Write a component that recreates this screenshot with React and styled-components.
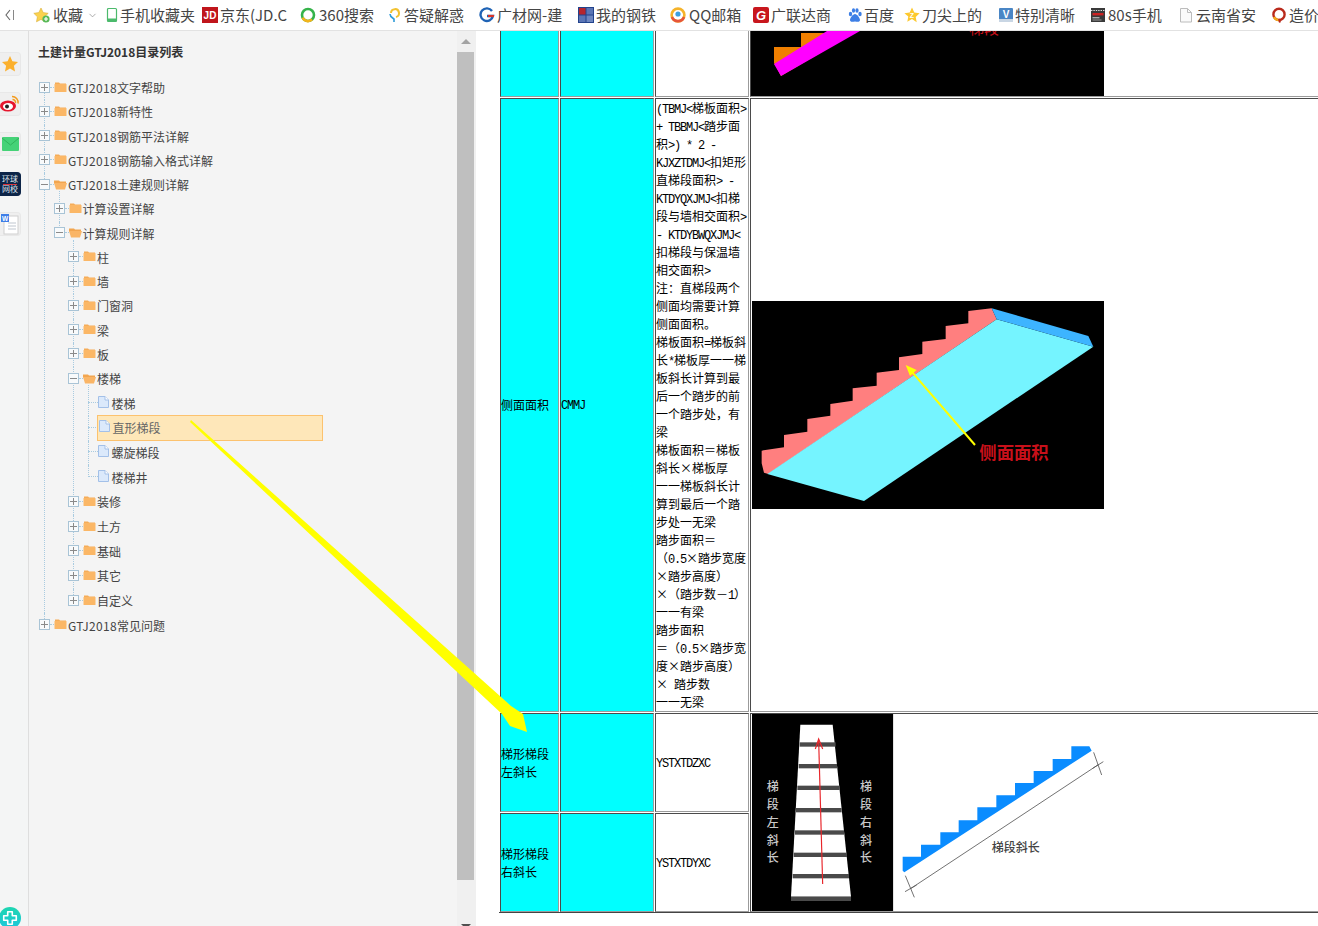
import React from "react";
import styled, { createGlobalStyle } from "styled-components";
import { ChevronDown } from "lucide-react";

const FONT = `"Noto Sans CJK SC", "Noto Sans", sans-serif`;

const Global = createGlobalStyle`
  html, body { margin: 0; padding: 0; background: #fff; overflow: hidden; }
  * { box-sizing: border-box; }
`;

const Page = styled.div`
  position: relative;
  width: 1318px;
  height: 926px;
  overflow: hidden;
  display: flex;
  flex-direction: column;
  font-family: ${FONT};
`;

/* ---------- bookmarks bar ---------- */
const Toolbar = styled.div`
  flex: 0 0 31px;
  height: 31px;
  display: flex;
  align-items: center;
  padding-left: 5px;
  background: #fff;
  border-bottom: 1px solid #e2e2e2;
  overflow: hidden;
`;
const BackBtn = styled.svg`
  flex: 0 0 10px;
  width: 10px;
  height: 12px;
  margin-right: 18px;
`;
const Bookmark = styled.div`
  flex: 0 0 ${(p) => p.$w}px;
  width: ${(p) => p.$w}px;
  display: flex;
  align-items: center;
  overflow: hidden;
  white-space: nowrap;
  font-size: 15px;
  line-height: 20px;
  color: #454545;
  & > svg:first-child { flex: none; margin-right: ${(p) => p.$gap ?? 2}px; }
`;
const Caret = styled(ChevronDown)`
  flex: none;
  margin-left: 4px;
  color: #888;
`;

const Ic = ({ children, w = 16 }) => (
  <svg width={w} height="16" viewBox={`0 0 ${w} 16`}>{children}</svg>
);
const IcoStar = () => (
  <Ic w={18}>
    <path d="M8 1l2.2 4.6 5 .7-3.6 3.5.9 5L8 12.4l-4.5 2.4.9-5L.8 6.3l5-.7z" fill="#fbd24e" stroke="#d9ae3a" strokeWidth=".6" />
    <circle cx="13" cy="12" r="3.6" fill="#58b957" />
    <path d="M13 10v4M11 12h4" stroke="#fff" strokeWidth="1.2" />
  </Ic>
);
const IcoPhone = () => (
  <Ic>
    <rect x="5.5" y="1.5" width="9" height="13" rx="1" fill="#fff" stroke="#4cba6c" strokeWidth="1.2" />
    <rect x="5.5" y="11.5" width="9" height="3" fill="#4cba6c" />
  </Ic>
);
const IcoJD = () => (
  <Ic>
    <rect width="16" height="16" fill="#c0151c" />
    <text x="8" y="12" textAnchor="middle" fontSize="10" fontWeight="700" fill="#fff" fontFamily="Liberation Sans">JD</text>
  </Ic>
);
const Ico360 = () => (
  <Ic>
    <circle cx="8" cy="8" r="6" fill="none" stroke="#35b34a" strokeWidth="2.6" />
    <path d="M2.6 10.6A6 6 0 0 0 12 12.6" fill="none" stroke="#f3b41b" strokeWidth="2.6" />
  </Ic>
);
const IcoAsk = () => (
  <Ic>
    <path d="M4 6a4 4 0 1 1 5 4" fill="none" stroke="#f2c230" strokeWidth="2" />
    <path d="M3 7c0 3 3 4 4 5v3" fill="none" stroke="#2f9bd8" strokeWidth="1.6" />
  </Ic>
);
const IcoG = () => (
  <Ic>
    <path d="M13 4A6.3 6.3 0 1 0 14 9H8" fill="none" stroke="#1f63b5" strokeWidth="2.4" />
    <path d="M9 9h6" stroke="#d8352a" strokeWidth="2.2" />
  </Ic>
);
const IcoSteel = () => (
  <Ic>
    <rect width="16" height="16" fill="#22438c" />
    <rect x="1" y="1" width="6.5" height="6.5" fill="#b5252d" />
    <rect x="8.5" y="8.5" width="6.5" height="6.5" fill="#6d86c0" />
    <rect x="8.5" y="1" width="6.5" height="6.5" fill="#5a75b5" />
    <rect x="1" y="8.5" width="6.5" height="6.5" fill="#5a75b5" />
  </Ic>
);
const IcoQQ = () => (
  <Ic>
    <circle cx="8" cy="8" r="6.4" fill="none" stroke="#f5b32a" strokeWidth="2.6" />
    <path d="M2 10a6.4 6.4 0 0 0 12 0" fill="none" stroke="#e6553a" strokeWidth="2.6" />
    <circle cx="8" cy="7" r="2.6" fill="#3da0e0" />
  </Ic>
);
const IcoGld = () => (
  <Ic>
    <rect width="16" height="16" rx="2" fill="#c8161d" />
    <text x="8" y="13" textAnchor="middle" fontSize="13" fontWeight="700" fontStyle="italic" fill="#fff" fontFamily="Liberation Sans">G</text>
  </Ic>
);
const IcoPaw = () => (
  <Ic>
    <g fill="#3d7fe6">
      <ellipse cx="3.5" cy="7" rx="1.7" ry="2.2" />
      <ellipse cx="6.5" cy="3.5" rx="1.6" ry="2.2" />
      <ellipse cx="10" cy="3.5" rx="1.6" ry="2.2" />
      <ellipse cx="13" cy="7" rx="1.7" ry="2.2" />
      <path d="M8 7c2 0 5 4 5 6s-2 2-5 1.4C5 15 3 15 3 13s3-6 5-6z" />
    </g>
  </Ic>
);
const IcoZ = () => (
  <Ic>
    <path d="M8 .6l2.3 4.9 5.3.7-3.9 3.7 1 5.3L8 12l-4.7 2.7 1-5.3L.4 6.2l5.3-.7z" fill="#fdc92f" />
    <text x="8" y="11" textAnchor="middle" fontSize="7" fontWeight="700" fill="#fff" fontFamily="Liberation Sans">Z</text>
  </Ic>
);
const IcoV = () => (
  <Ic>
    <rect x="1" y="1" width="14" height="14" rx="1" fill="#4a86c5" />
    <rect x="1" y="12" width="14" height="3" fill="#c9d6e4" />
    <text x="8" y="10.5" textAnchor="middle" fontSize="10" fontWeight="700" fill="#fff" fontFamily="Liberation Sans">V</text>
  </Ic>
);
const IcoFilm = () => (
  <Ic>
    <rect x="1" y="1" width="14" height="14" fill="#3a3a3a" />
    <path d="M1 3.5h14" stroke="#ddd" strokeWidth="1" strokeDasharray="1.4 1" />
    <rect x="2.5" y="6" width="11" height="2.4" fill="#c22" />
    <rect x="2.5" y="10" width="7" height="1.4" fill="#aaa" />
    <rect x="2.5" y="12.4" width="9" height="1.2" fill="#888" />
  </Ic>
);
const IcoFile = () => (
  <Ic>
    <path d="M2.5 1.5h7l4 4v9.5h-11z" fill="#fafafa" stroke="#bcbcbc" />
    <path d="M9.5 1.5v4h4" fill="none" stroke="#bcbcbc" />
  </Ic>
);
const IcoQ = () => (
  <Ic>
    <circle cx="8" cy="7.4" r="5.6" fill="none" stroke="#b92a1c" strokeWidth="2.4" />
    <path d="M3 10a5.6 5.6 0 0 0 6 3" fill="none" stroke="#f2a91c" strokeWidth="2.4" />
    <path d="M8 12l1 3.6" stroke="#b92a1c" strokeWidth="2" />
  </Ic>
);

const bookmarks = [
  { w: 100, Icon: IcoPhone, t: "手机收藏夹" },
  { w: 98, Icon: IcoJD, t: "京东(JD.C" },
  { w: 87, Icon: Ico360, t: "360搜索", gap: 3 },
  { w: 92, Icon: IcoAsk, t: "答疑解惑", gap: 1 },
  { w: 99, Icon: IcoG, t: "广材网-建" },
  { w: 92, Icon: IcoSteel, t: "我的钢铁" },
  { w: 83, Icon: IcoQQ, t: "QQ邮箱", gap: 3 },
  { w: 94, Icon: IcoGld, t: "广联达商" },
  { w: 57, Icon: IcoPaw, t: "百度", gap: 1 },
  { w: 94, Icon: IcoZ, t: "刀尖上的" },
  { w: 92, Icon: IcoV, t: "特别清晰", gap: 1 },
  { w: 88, Icon: IcoFilm, t: "80s手机" },
  { w: 93, Icon: IcoFile, t: "云南省安", gap: 2 },
  { w: 60, Icon: IcoQ, t: "造价通" },
];

/* ---------- left rail ---------- */
const Body = styled.div`
  flex: 1;
  min-height: 0;
  display: flex;
`;
const Rail = styled.div`
  flex: 0 0 29px;
  display: flex;
  flex-direction: column;
  gap: 16px;
  padding-top: 21px;
  background: #f4f5f5;
  border-right: 1px solid #dedede;
  overflow: hidden;
`;
const RailCard = styled.div`
  width: 21px;
  height: 24px;
  flex: none;
  display: flex;
  align-items: center;
  justify-content: center;
  background: ${(p) => (p.$dark ? "#0d2548" : "#efefef")};
  border-radius: 0 4px 4px 0;
  border: 1px solid ${(p) => (p.$dark ? "#0d2548" : "#e8e8e8")};
  border-left: 0;
`;
const RailBrand = styled.div`
  font-size: 8px;
  line-height: 8px;
  color: #dfe5ee;
  text-align: center;
  white-space: nowrap;
  & > i { display: block; height: 1px; background: #d8323c; margin: 1px 1px 0; }
`;
const RailPlus = styled.div`
  margin-top: auto;
  margin-left: -1px;
  margin-bottom: -3px;
  width: 22px;
  height: 22px;
  flex: none;
  border-radius: 50%;
  background: linear-gradient(180deg, #1dd6b0, #1cc6dc);
  display: flex;
  align-items: center;
  justify-content: center;
`;

/* ---------- tree ---------- */
const TreePanel = styled.div`
  flex: 0 0 428px;
  background: #f4f4f4;
  padding: 11px 0 0 9px;
  color: #444;
  font-size: 12px;
`;
const PanelTitle = styled.div`
  font-size: 12px;
  line-height: 20px;
  font-weight: 700;
  color: #333;
  margin-bottom: 14px;
`;
const Group = styled.div`
  margin-left: ${(p) => p.$indent}px;
`;
const Node = styled.div`
  position: relative;
  &::before {
    content: "";
    position: absolute;
    left: 0;
    top: ${(p) => (p.$first ? (p.$root ? "12px" : "-6px") : "0")};
    bottom: ${(p) => (p.$last ? "calc(100% - 12px)" : "0")};
    border-left: 1px dotted #a9cbe0;
  }
`;
const Row = styled.div`
  position: relative;
  height: ${(p) => (p.$tall ? "24.7px" : "24.25px")};
  display: flex;
  align-items: center;
  white-space: nowrap;
`;
const Switch = styled.span`
  flex: none;
  position: relative;
  width: 11px;
  height: 11px;
  margin-left: -5px;
  margin-top: -2px;
  border: 1px solid #a9c4d6;
  background: #f8fafb;
  &::before {
    content: "";
    position: absolute;
    left: 1px;
    right: 1px;
    top: 4px;
    height: 1px;
    background: #8a8a8a;
  }
  &::after {
    content: "";
    display: ${(p) => (p.$open ? "none" : "block")};
    position: absolute;
    top: 1px;
    bottom: 1px;
    left: 4px;
    width: 1px;
    background: #8a8a8a;
  }
`;
const Dots = styled.span`
  flex: none;
  width: ${(p) => p.$w}px;
  margin-top: -2px;
  border-top: 1px dotted #a9cbe0;
`;
const NodeLabel = styled.span`
  margin-left: 1px;
  line-height: 20px;
  color: ${(p) => (p.$muted ? "#666" : "#444")};
`;
const LeafLabel = styled(NodeLabel)`
  margin-left: 3px;
`;
const LabelLatin = styled.span`
  letter-spacing: 0.35px;
`;
const Selected = styled.div`
  flex: none;
  width: 226px;
  height: 26px;
  margin-left: -1px;
  margin-top: -1px;
  padding-left: 1px;
  display: flex;
  align-items: center;
  background: #fee7b9;
  border: 1px solid #fcc26e;
`;

const FolderIcon = ({ open }) => (
  <svg width="13" height="12" viewBox="0 0 13 12" style={{ flex: "none", marginTop: -3 }}>
    {open ? (
      <>
        <path d="M0 2.5h5l1 1h6v2H0z" fill="#f2a54f" />
        <path d="M0 5h13l-2 6.5H2z" fill="#fab566" />
      </>
    ) : (
      <>
        <path d="M1 1.5h4l1 1h6v1H1z" fill="#f5ac58" />
        <rect x="0.5" y="3" width="12" height="8" rx="0.5" fill="#fbb766" />
      </>
    )}
  </svg>
);
const FileIcon = () => (
  <svg width="11" height="12" viewBox="0 0 11 12" style={{ flex: "none", marginTop: -3 }}>
    <path d="M.5.5h6.5l3.5 3.5v7.5H.5z" fill="#dbe9fb" stroke="#a3c0e8" />
    <path d="M7 .5V4h3.5" fill="#fff" stroke="#a3c0e8" />
  </svg>
);

const leaves = ["楼梯", "直形梯段", "螺旋梯段", "楼梯井"];
const closed = (tall, ...names) => names.map((t) => ({ t, tall }));
const tree = [
  ...closed(false, "GTJ2018文字帮助", "GTJ2018新特性", "GTJ2018钢筋平法详解", "GTJ2018钢筋输入格式详解"),
  {
    t: "GTJ2018土建规则详解",
    kids: [
      { t: "计算设置详解" },
      {
        t: "计算规则详解",
        kids: [
          ...closed(false, "柱", "墙", "门窗洞", "梁", "板"),
          { t: "楼梯", kids: leaves.map((t) => ({ t, tall: true, leaf: true, sel: t === "直形梯段" })) },
          ...closed(true, "装修", "土方", "基础", "其它", "自定义"),
        ],
      },
    ],
  },
  { t: "GTJ2018常见问题", tall: true },
];

const LabelText = ({ text }) =>
  text.split(/([\x00-\x7f]+)/).map((part, i) =>
    i % 2 ? <LabelLatin key={i}>{part}</LabelLatin> : part
  );

const TreeList = ({ items, depth = 0 }) => (
  <Group $indent={depth === 0 ? 6 : 14.5}>
    {items.map((n, i) => (
      <Node key={n.t + i} $first={i === 0} $root={depth === 0} $last={i === items.length - 1}>
        <Row $tall={n.tall}>
          {n.leaf ? (
            <>
              <Dots $w={10} />
              {n.sel ? (
                <Selected>
                  <FileIcon />
                  <LeafLabel $muted>{n.t}</LeafLabel>
                </Selected>
              ) : (
                <>
                  <FileIcon />
                  <LeafLabel>{n.t}</LeafLabel>
                </>
              )}
            </>
          ) : (
            <>
              <Switch $open={!!n.kids} />
              <Dots $w={4} />
              <FolderIcon open={!!n.kids} />
              <NodeLabel><LabelText text={n.t} /></NodeLabel>
            </>
          )}
        </Row>
        {n.kids && <TreeList items={n.kids} depth={depth + 1} />}
      </Node>
    ))}
  </Group>
);

/* ---------- scrollbar ---------- */
const Scrollbar = styled.div`
  flex: 0 0 19px;
  display: flex;
  flex-direction: column;
  align-items: stretch;
  background: #f0f0f0;
  padding-right: 2px;
`;
const ScrollBtn = styled.div`
  flex: ${(p) => (p.$down ? "1" : "0 0 21px")};
  display: flex;
  justify-content: center;
  align-items: ${(p) => (p.$down ? "flex-end" : "center")};
  &::after {
    content: "";
    border-left: 5px solid transparent;
    border-right: 5px solid transparent;
    ${(p) => (p.$down ? "border-top: 5px solid #505050; margin-bottom: -3px;" : "border-bottom: 5px solid #a3a3a3;")}
  }
`;
const ScrollThumb = styled.div`
  flex: 0 0 828px;
  background: #bfbfbf;
`;

/* ---------- content table ---------- */
const Content = styled.div`
  flex: 1;
  min-width: 0;
  padding-left: 23px;
  background: #fff;
  overflow: hidden;
`;
const Table = styled.table`
  table-layout: fixed;
  width: 852px;
  margin-top: -2px;
  border-collapse: separate;
  border-spacing: 1px;
  box-shadow: inset 0 -1px 0 #444;
  font-family: ${FONT};
  font-size: 12px;
  line-height: 18px;
  color: #000;
`;
const Cell = styled.td`
  padding: 0;
  height: ${(p) => (p.$h ? `${p.$h}px` : "auto")};
  vertical-align: middle;
  white-space: nowrap;
  background: ${(p) => (p.$fill ? "#00ffff" : "#fff")};
  border: 1px solid;
  border-color: #4a4a4a #9b9b9b #9b9b9b #4a4a4a;
`;
const Latin = styled.span`
  font-family: "Liberation Mono", monospace;
  letter-spacing: -1.2px;
`;
const TextLine = styled.div`
  height: 18px;
`;
const Picture = styled.svg`
  display: block;
  margin-left: ${(p) => p.$ml ?? 1}px;
`;

const Mixed = ({ text }) =>
  text.split(/([\x00-\x7f]+)/).map((part, i) =>
    i % 2 ? <Latin key={i}>{part}</Latin> : part
  );
const Lines = ({ lines }) =>
  lines.map((l, i) => (
    <TextLine key={i}>
      <Mixed text={l} />
    </TextLine>
  ));

const formula = [
  "(TBMJ<梯板面积>", "+ TBBMJ<踏步面", "积>) * 2 -", "KJXZTDMJ<扣矩形", "直梯段面积> -",
  "KTDYQXJMJ<扣梯", "段与墙相交面积>", "- KTDYBWQXJMJ<", "扣梯段与保温墙", "相交面积>",
  "注：直梯段两个", "侧面均需要计算", "侧面面积。", "梯板面积=梯板斜", "长*梯板厚一一梯",
  "板斜长计算到最", "后一个踏步的前", "一个踏步处，有", "梁", "梯板面积＝梯板",
  "斜长×梯板厚", "一一梯板斜长计", "算到最后一个踏", "步处一无梁", "踏步面积＝",
  "（0.5×踏步宽度", "×踏步高度）", "×（踏步数－1）", "一一有梁", "踏步面积",
  "＝（0.5×踏步宽", "度×踏步高度）", "×  踏步数", "一一无梁",
];

const TopPicture = () => (
  <Picture $ml={0} width="353" height="65" viewBox="0 0 353 65">
    <rect width="353" height="65" fill="#000" />
    <polygon points="23,16 50,16 50,2 76,2 76,18 30,45 23,32" fill="#f07f00" />
    <polygon points="23,33 76,0 109,0 30,45" fill="#ff00ff" />
    <text x="218" y="3" fontSize="15" fill="#c8101a" fontFamily={FONT}>梯段</text>
  </Picture>
);

const SidePicture = () => {
  const stair =
    "65,482 132,472 132,435 202,425 202,387 271,377 271,342 338,332 338,295 410,287 410,248 477,240 477,202 547,192 547,155 617,147 617,108 685,100 685,63 755,55 770,88 85,552 72,548 65,520";
  return (
    <Picture width="352" height="208" viewBox="36 33 1056 624">
      <rect x="36" y="33" width="1056" height="624" fill="#000" />
      <polygon points={stair} fill="#ff7f7f" />
      <polygon points="770,88 1060,170 372,633 82,552" fill="#75f4ff" />
      <polygon points="755,55 1045,138 1060,170 770,88" fill="#3db4ff" />
      <line x1="705" y1="465" x2="515" y2="245" stroke="#ffff00" strokeWidth="6" />
      <polygon points="497,225 530,240 510,258" fill="#ffff00" />
      <text x="718" y="508" fontSize="52" fontWeight="700" fill="#c8101a" fontFamily={FONT}>侧面面积</text>
    </Picture>
  );
};

const SlopePicture = () => {
  const bars = [
    [130, 181, 289], [195, 178, 293], [260, 174, 301], [327, 170, 307],
    [394, 167, 314], [461, 163, 323], [525, 160, 329], [593, 155, 335],
  ];
  const left = ["梯", "段", "左", "斜", "长"];
  const right = ["梯", "段", "右", "斜", "长"];
  const ys = [277, 330, 384, 437, 490];
  return (
    <Picture width="358" height="197" viewBox="38 45 1074 591">
      <rect x="38" y="45" width="424" height="591" fill="#000" />
      <rect x="462" y="45" width="650" height="591" fill="#fff" />
      <polygon points="183,77 280,77 335,593 155,593" fill="#fff" />
      {bars.map(([y, a, b]) => (
        <rect key={y} x={a} y={y} width={b - a} height="13" fill="#4a4a4a" />
      ))}
      <path d="M250 555L238 125" stroke="#e8252a" strokeWidth="3.5" fill="none" />
      <path d="M228 150L238 120L250 150" stroke="#e8252a" strokeWidth="3.5" fill="none" />
      {left.map((c, i) => (
        <text key={i} x="100" y={ys[i]} textAnchor="middle" fontSize="36" fontWeight="500" fill="#c8c8c8" fontFamily={FONT}>{c}</text>
      ))}
      {right.map((c, i) => (
        <text key={i} x="380" y={ys[i]} textAnchor="middle" fontSize="36" fontWeight="500" fill="#c8c8c8" fontFamily={FONT}>{c}</text>
      ))}
      <polygon
        points="490,473 545,473 545,437 603,437 603,400 658,400 658,364 714,364 714,325 771,325 771,289 827,289 827,252 883,252 883,216 940,216 940,180 996,180 996,142 1050,142 1057,155 495,520 490,515"
        fill="#0a8cff"
      />
      <path d="M515 568L1077 197" stroke="#555" strokeWidth="2.5" />
      <path d="M498 530L525 595M497 578L532 558M1063 160L1087 228M1060 208L1092 188" stroke="#555" strokeWidth="2.5" />
      <text x="757" y="458" fontSize="36" fontWeight="500" fill="#444" fontFamily={FONT}>梯段斜长</text>
    </Picture>
  );
};

const Overlay = styled.svg`
  position: absolute;
  left: 0;
  top: 0;
  pointer-events: none;
`;

export default function App() {
  return (
    <>
      <Global />
      <Page>
        <Toolbar>
          <BackBtn viewBox="0 0 10 12">
            <path d="M5 1L1 6l4 5" fill="none" stroke="#666" strokeWidth="1.1" />
            <path d="M8.5 1v10" stroke="#888" strokeWidth="1" />
          </BackBtn>
          <Bookmark $w={69} $gap={2}>
            <IcoStar />
            收藏
            <Caret size={11} strokeWidth={1.5} />
          </Bookmark>
          {bookmarks.map(({ w, Icon, t, gap }) => (
            <Bookmark key={t} $w={w} $gap={gap}>
              <Icon />
              {t}
            </Bookmark>
          ))}
        </Toolbar>
        <Body>
          <Rail>
            <RailCard>
              <svg width="18" height="18" viewBox="0 0 18 18">
                <path d="M9 1l2.4 5.2 5.6.7-4.1 3.9 1.1 5.7L9 13.6l-5 2.9 1.1-5.7L1 6.9l5.6-.7z" fill="#fbb02d" />
              </svg>
            </RailCard>
            <RailCard>
              <svg width="20" height="18" viewBox="0 0 20 18">
                <ellipse cx="8" cy="11" rx="8" ry="5.6" fill="#e6162d" />
                <ellipse cx="8" cy="11.5" rx="5" ry="3.4" fill="#fff" />
                <circle cx="7" cy="11.6" r="2" fill="#222" />
                <path d="M12 1.5a6 6 0 0 1 6 7M12.5 4.5a3 3 0 0 1 3 3.6" fill="none" stroke="#f39c1f" strokeWidth="1.5" />
              </svg>
            </RailCard>
            <RailCard>
              <svg width="17" height="14" viewBox="0 0 17 14">
                <rect width="17" height="14" rx="1" fill="#45d277" />
                <path d="M0 1l8.5 7L17 1" fill="none" stroke="#30b45c" strokeWidth="1" />
              </svg>
            </RailCard>
            <RailCard $dark>
              <RailBrand>
                环球
                <i />
                网校
              </RailBrand>
            </RailCard>
            <RailCard>
              <svg width="19" height="22" viewBox="0 0 19 22">
                <rect x="3" y="3" width="14" height="18" fill="#fff" stroke="#cfcfcf" />
                <path d="M7 10h8M7 13h8M7 16h8" stroke="#bfc6cf" />
                <rect x="0" y="1" width="8" height="8" fill="#3f7fe8" />
                <text x="4" y="7.6" textAnchor="middle" fontSize="6.5" fontWeight="700" fill="#fff" fontFamily="Liberation Sans">W</text>
              </svg>
            </RailCard>
            <RailPlus>
              <svg width="16" height="16" viewBox="0 0 14 14">
                <path d="M5 1.5h4v3.5h3.5v4H9v3.5H5V9H1.5V5H5z" fill="none" stroke="#fff" strokeWidth="1.4" strokeLinejoin="round" />
              </svg>
            </RailPlus>
          </Rail>
          <TreePanel>
            <PanelTitle>土建计量GTJ2018目录列表</PanelTitle>
            <TreeList items={tree} />
          </TreePanel>
          <Scrollbar>
            <ScrollBtn />
            <ScrollThumb />
            <ScrollBtn $down />
          </Scrollbar>
          <Content>
            <Table>
              <colgroup>
                <col style={{ width: 59 }} />
                <col style={{ width: 94 }} />
                <col style={{ width: 94 }} />
                <col />
              </colgroup>
              <tbody>
                <tr>
                  <Cell $fill $h={67} />
                  <Cell $fill />
                  <Cell />
                  <Cell><TopPicture /></Cell>
                </tr>
                <tr>
                  <Cell $fill>侧面面积</Cell>
                  <Cell $fill><Latin>CMMJ</Latin></Cell>
                  <Cell><Lines lines={formula} /></Cell>
                  <Cell><SidePicture /></Cell>
                </tr>
                <tr>
                  <Cell $fill $h={99}><Lines lines={["梯形梯段", "左斜长"]} /></Cell>
                  <Cell $fill />
                  <Cell><Latin>YSTXTDZXC</Latin></Cell>
                  <Cell rowSpan={2}><SlopePicture /></Cell>
                </tr>
                <tr>
                  <Cell $fill $h={99}><Lines lines={["梯形梯段", "右斜长"]} /></Cell>
                  <Cell $fill />
                  <Cell><Latin>YSTXTDYXC</Latin></Cell>
                </tr>
              </tbody>
            </Table>
          </Content>
        </Body>
        <Overlay width="1318" height="926" viewBox="0 0 1318 926">
          <polygon points="190,422 191,420 511,706 523,714 527,732 510,726 502,714" fill="#ffff00" />
        </Overlay>
      </Page>
    </>
  );
}
